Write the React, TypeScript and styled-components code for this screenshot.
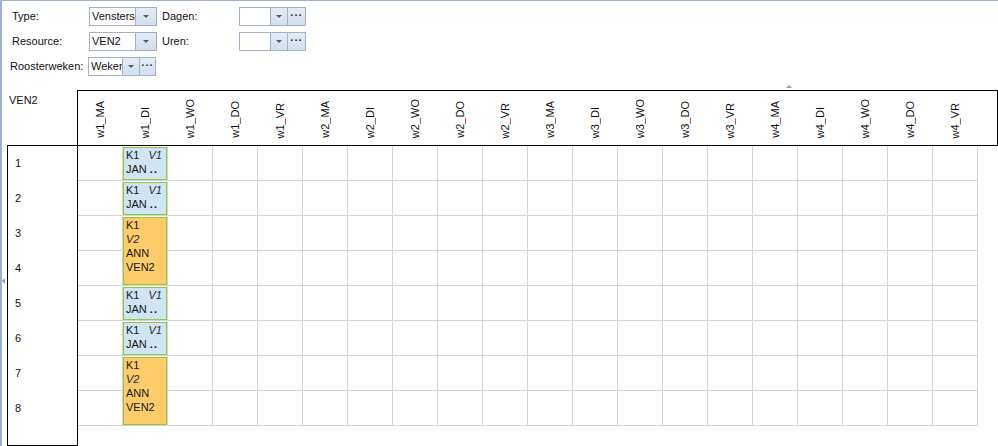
import React from 'react';
import styled, { createGlobalStyle } from 'styled-components';

const GlobalStyle = createGlobalStyle`
  html, body {
    margin: 0;
    padding: 0;
    background: #ffffff;
  }
  body {
    font-family: "Liberation Sans", Arial, sans-serif;
    font-size: 11px;
    color: #111111;
  }
`;

const Frame = styled.div`
  position: relative;
  width: 998px;
  height: 446px;
  overflow: hidden;
  background: #ffffff;
  box-shadow: inset 2px 1px 0 #9bb0d0;
`;

const Filters = styled.div`
  display: flex;
  flex-direction: column;
  gap: 6px;
  padding-top: 7px;
`;

const FilterRow = styled.div<{ $indent: number }>`
  display: flex;
  align-items: center;
  height: 19px;
  padding-left: ${(p) => p.$indent}px;
`;

const Label = styled.span<{ $width: number; $gap?: number }>`
  width: ${(p) => p.$width}px;
  margin-left: ${(p) => p.$gap ?? 0}px;
  line-height: 19px;
  white-space: nowrap;
`;

const Combo = styled.div<{ $width: number }>`
  display: flex;
  width: ${(p) => p.$width}px;
  height: 19px;
  box-sizing: border-box;
  border: 1px solid #a3b1c5;
  background: #ffffff;
`;

const ComboText = styled.div`
  flex: 1;
  min-width: 0;
  overflow: hidden;
  white-space: nowrap;
  padding-left: 2px;
  line-height: 17px;
`;

const ComboButton = styled.div<{ $width: number }>`
  width: ${(p) => p.$width}px;
  flex: none;
  display: flex;
  align-items: center;
  justify-content: center;
  border-left: 1px solid #a3b1c5;
  background: linear-gradient(#e4ecf6, #d3deec);
`;

const Arrow = styled.span`
  width: 0;
  height: 0;
  border-left: 3px solid transparent;
  border-right: 3px solid transparent;
  border-top: 3px solid #4e5b6c;
`;

const Dots = styled.span`
  font-size: 11px;
  font-weight: bold;
  letter-spacing: 0.5px;
  color: #2b3440;
  line-height: 10px;
  margin-top: -3px;
`;

const Schedule = styled.div`
  margin-top: 14px;
`;

const HeadRow = styled.div`
  display: flex;
`;

const Corner = styled.div`
  width: 77px;
  flex: none;
  box-sizing: border-box;
  padding: 4px 0 0 9px;
  line-height: 13px;
`;

const HeaderBox = styled.div`
  width: 921px;
  height: 56px;
  box-sizing: border-box;
  border: 1px solid #000000;
  display: flex;
`;

const HeaderCell = styled.div`
  width: 45px;
  flex: none;
  display: flex;
  align-items: flex-end;
  justify-content: center;
  padding: 0 2px 7px 0;
  box-sizing: border-box;
`;

const HeaderText = styled.span`
  writing-mode: vertical-rl;
  transform: rotate(180deg);
  white-space: nowrap;
  line-height: 12px;
`;

const BodyRow = styled.div`
  display: flex;
  align-items: flex-start;
`;

const RowHeader = styled.div`
  margin: -1px 0 0 7px;
  width: 71px;
  height: 301px;
  box-sizing: border-box;
  border: 1px solid #000000;
  flex: none;
`;

const RowLabel = styled.div`
  height: 35px;
  line-height: 35px;
  padding-left: 7px;
`;

const GridBody = styled.div`
  display: grid;
  grid-template-columns: repeat(20, 45px);
  grid-template-rows: repeat(8, 35px);
  background-image:
    linear-gradient(to right, transparent 44px, #d4d4d4 44px),
    linear-gradient(to bottom, transparent 34px, #d4d4d4 34px);
  background-size: 45px 35px;
`;

const Event = styled.div<{ $col: number; $row: number; $span: number; $tone: 'blue' | 'orange' }>`
  grid-column: ${(p) => p.$col};
  grid-row: ${(p) => p.$row} / span ${(p) => p.$span};
  margin: 1px 1px 1px 0;
  box-sizing: border-box;
  border: 1px solid #93c83e;
  background: ${(p) => (p.$tone === 'blue' ? '#cfe5f6' : '#ffcc6a')};
  padding: 0 4px 0 2px;
  line-height: 14px;
  color: #151515;
  overflow: hidden;
`;

const EventLine = styled.div`
  display: flex;
  justify-content: space-between;
  white-space: nowrap;
`;

const Em = styled.span`
  font-style: italic;
  color: #2a2a2a;
`;

const Ellip = styled.b`
  letter-spacing: 1px;
`;

const SplitUp = styled.span`
  position: absolute;
  left: 786px;
  top: 85px;
  border-left: 3px solid transparent;
  border-right: 3px solid transparent;
  border-bottom: 3px solid #8a9cbb;
`;

const SplitLeft = styled.span`
  position: absolute;
  left: 2px;
  top: 278px;
  border-top: 3px solid transparent;
  border-bottom: 3px solid transparent;
  border-right: 3px solid #8a9cbb;
`;

const days = ['MA', 'DI', 'WO', 'DO', 'VR'];
const columns = [1, 2, 3, 4].flatMap((w) => days.map((d) => `w${w}_${d}`));
const rows = [1, 2, 3, 4, 5, 6, 7, 8];

type Ev = { row: number; span: number; tone: 'blue' | 'orange' };
const events: Ev[] = [
  { row: 1, span: 1, tone: 'blue' },
  { row: 2, span: 1, tone: 'blue' },
  { row: 3, span: 2, tone: 'orange' },
  { row: 5, span: 1, tone: 'blue' },
  { row: 6, span: 1, tone: 'blue' },
  { row: 7, span: 2, tone: 'orange' },
];

const App: React.FC = () => {
  return (
    <Frame>
      <GlobalStyle />
      <Filters>
        <FilterRow $indent={12}>
          <Label $width={77}>Type:</Label>
          <Combo $width={68}>
            <ComboText>Vensters</ComboText>
            <ComboButton $width={20}><Arrow /></ComboButton>
          </Combo>
          <Label $width={77} $gap={5}>Dagen:</Label>
          <Combo $width={67}>
            <ComboText />
            <ComboButton $width={16}><Arrow /></ComboButton>
            <ComboButton $width={17}><Dots>···</Dots></ComboButton>
          </Combo>
        </FilterRow>
        <FilterRow $indent={12}>
          <Label $width={77}>Resource:</Label>
          <Combo $width={68}>
            <ComboText>VEN2</ComboText>
            <ComboButton $width={20}><Arrow /></ComboButton>
          </Combo>
          <Label $width={77} $gap={5}>Uren:</Label>
          <Combo $width={67}>
            <ComboText />
            <ComboButton $width={16}><Arrow /></ComboButton>
            <ComboButton $width={17}><Dots>···</Dots></ComboButton>
          </Combo>
        </FilterRow>
        <FilterRow $indent={10}>
          <Label $width={78}>Roosterweken:</Label>
          <Combo $width={68}>
            <ComboText>Weker</ComboText>
            <ComboButton $width={16}><Arrow /></ComboButton>
            <ComboButton $width={15}><Dots>···</Dots></ComboButton>
          </Combo>
        </FilterRow>
      </Filters>

      <Schedule>
        <HeadRow>
          <Corner>VEN2</Corner>
          <HeaderBox>
            {columns.map((c) => (
              <HeaderCell key={c}>
                <HeaderText>{c}</HeaderText>
              </HeaderCell>
            ))}
          </HeaderBox>
        </HeadRow>
        <BodyRow>
          <RowHeader>
            {rows.map((r) => (
              <RowLabel key={r}>{r}</RowLabel>
            ))}
          </RowHeader>
          <GridBody>
            {events.map((e) => (
              <Event key={e.row} $col={2} $row={e.row} $span={e.span} $tone={e.tone}>
                {e.tone === 'blue' ? (
                  <>
                    <EventLine>
                      <span>K1</span>
                      <Em>V1</Em>
                    </EventLine>
                    <EventLine>
                      <span>JAN <Ellip>..</Ellip></span>
                    </EventLine>
                  </>
                ) : (
                  <>
                    <EventLine>K1</EventLine>
                    <EventLine><Em>V2</Em></EventLine>
                    <EventLine>ANN</EventLine>
                    <EventLine>VEN2</EventLine>
                  </>
                )}
              </Event>
            ))}
          </GridBody>
        </BodyRow>
      </Schedule>
      <SplitUp />
      <SplitLeft />
    </Frame>
  );
};

export default App;
